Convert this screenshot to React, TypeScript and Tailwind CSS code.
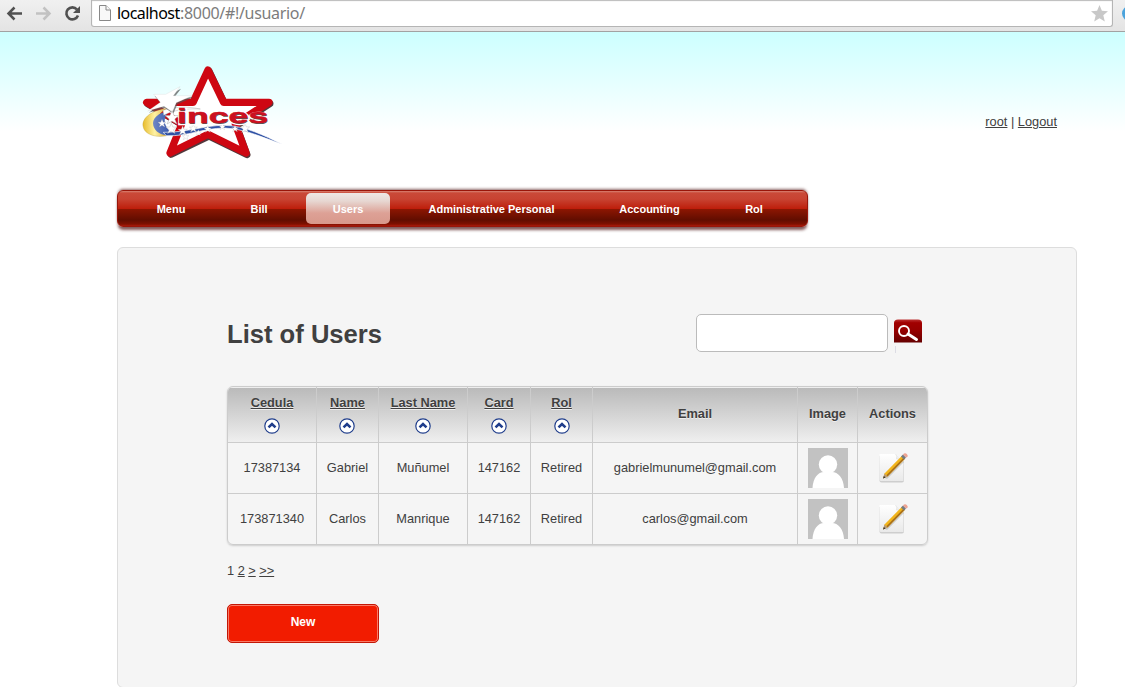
import React from 'react';

function BrowserBar() {
  return (
    <div className="flex h-8 shrink-0 border-b border-[#a2a2a2] bg-linear-to-b from-[#f0f0f0] to-[#e4e4e4]">
      <svg className="h-[28px] w-[91px] shrink-0" viewBox="0 0 91 28" fill="none">
        <path d="M22 13.500H8.500M14.500 7.500l-6 6 6 6" stroke="#505050" strokeWidth="2.500" />
        <path d="M36 13.500h13.500M43.500 7.500l6 6-6 6" stroke="#c2c2c2" strokeWidth="2.500" />
        <path d="M77 9.500a6 6 0 1 0 1 6" stroke="#505050" strokeWidth="2.600" />
        <path d="M80 6v7h-7z" fill="#505050" />
      </svg>
      <div className="flex h-[27px] w-[1022px] shrink-0 items-center rounded-b-[3px] border border-t-0 border-[#b5b5b5] bg-white shadow-[inset_0_1px_1px_#bbb]">
        <svg className="ml-[7px] h-4 w-3 shrink-0" viewBox="0 0 12 16" fill="#f8f8f8" stroke="#888">
          <path d="M.5.500h6.500l4.500 4.500v10.500H.5z" />
          <path d="M7 .5V5h4.500" />
        </svg>
        <div className="ml-[6px] flex whitespace-nowrap font-['Noto_Sans',sans-serif] text-[16px] leading-[26px]">
          <span className="w-[63px] tracking-[-0.55px] text-black">localhost</span>
          <span className="tracking-[-0.32px] text-[#7c7c7c]">:8000/#!/usuario/</span>
        </div>
        <svg className="ml-auto mr-[4px] size-[17px]" viewBox="0 0 17 17" fill="#c8c8c8">
          <path d="m8.500 0 2.400 5.800 6.100.500-4.700 4 1.500 6.200-5.300-3.300-5.300 3.300 1.500-6.200L0 6.300l6.100-.5z" />
        </svg>
      </div>
      <div className="h-7 w-[12px] overflow-hidden pl-[9px] pt-[6px]">
        <div className="size-[15px] rounded-full bg-[#4ba3dc]" />
      </div>
    </div>
  );
}

const smallStar = 'M0-10 3-3 10-3 4 2 7 9 0 5-7 9-4 2-10-3-3-3Z';

function Logo() {
  return (
    <svg className="ml-[13px] mt-[23px] h-[115px] w-[160px] shrink-0" viewBox="0 0 480 345">
      <defs>
        <linearGradient id="gold" x1="0" x2="1">
          <stop stopColor="#e8bd2c" />
          <stop offset=".45" stopColor="#fff2a5" />
          <stop offset="1" stopColor="#d5a229" />
        </linearGradient>
        <linearGradient id="blue" x1="0" x2="1">
          <stop stopColor="#6f87c5" />
          <stop offset="1" stopColor="#2448a5" />
        </linearGradient>
        <filter id="soft"><feGaussianBlur stdDeviation="2" /></filter>
      </defs>
      <path d="M234 45 281 143H417L316 209 348 296 234 240 120 295 155 207 50 143H189Z" fill="none" stroke="#35191b" strokeWidth="21" strokeLinejoin="round" transform="translate(3 3)" opacity=".85" filter="url(#soft)" />
      <path d="M234 45 281 142H417L316 207 348 294 234 238 120 294 155 207 50 142H189Z" fill="#fff" stroke="#ce0712" strokeWidth="22" strokeLinejoin="round" />
      <path d="M112 160C65 166 36 188 39 213C42 240 82 251 118 240C72 227 65 184 112 160Z" fill="url(#gold)" stroke="#b79c3c" strokeWidth="1" />
      <path d="M120 166C82 175 65 191 70 212C76 235 106 247 137 238C105 225 91 192 120 166Z" fill="url(#blue)" />
      <path d="M99 166C145 152 179 156 211 162C166 160 126 166 101 181Z" fill="#fff" stroke="#909090" strokeWidth="1" />
      <path d="M100 232C175 232 225 211 282 211C345 212 402 241 457 268C390 245 345 222 284 219C215 220 174 245 109 242Z" fill="#2e50a4" stroke="#fff" strokeWidth="2" />
      <path d="M151 98 131 124H188L140 145 128 173 103 156 54 170 92 144 72 120H108Z" fill="#555" opacity=".7" filter="url(#soft)" transform="translate(2 3)" />
      <path d="M150 95 130 122H187L139 143 127 171 102 154 53 168 91 142 71 118H107Z" fill="#fff" stroke="#bbb" strokeWidth=".6" />
      {[
        [96, 205, 1.2], [126, 188, 2.1], [124, 221, 1.6], [158, 227, 1.4], [190, 220, 1.2],
        [167, 245, 1], [205, 233, .9], [233, 222, 1.1], [277, 215, 1], [315, 221, 1], [345, 220, 1.4], [190, 202, .9],
      ].map(([x, y, s]) => (
        <path key={`${x}-${y}`} d={smallStar} fill="#fff" stroke="#aaa" strokeWidth=".7" transform={`translate(${x} ${y}) scale(${s})`} />
      ))}
      <g fontFamily="Liberation Sans, sans-serif" fontWeight="bold" fontSize="61" paintOrder="stroke">
        <text x="143" y="207" textLength="274" lengthAdjust="spacingAndGlyphs" fill="#555" stroke="#fff" strokeWidth="7">inces</text>
        <text x="141" y="205" textLength="274" lengthAdjust="spacingAndGlyphs" fill="#cc1020" stroke="#c71320" strokeWidth="1.500">inces</text>
      </g>
    </svg>
  );
}

function Nav() {
  const item = 'flex h-[31px] items-center justify-center rounded-[5px] pt-[1.5px]';
  return (
    <nav className="mt-[20px] flex h-[37px] w-[691px] shrink-0 rounded-[6px] border border-[#991509] bg-[linear-gradient(180deg,#d98273_0px,#ca4938_2px,#c84332_8px,#bd1d0a_18px,#8d1602_18px,#610d00_29px,#7f1000_33px,#aa1b0b_35px)] pt-[2px] text-[11px] font-bold text-white shadow-[0_-2px_3px_-1px_rgba(65,0,0,.6),0_4px_3px_-1px_rgba(65,0,0,.65)]">
      <a className={`${item} ml-[12px] w-[82px]`}>Menu</a>
      <a className={`${item} ml-[12px] w-[70px]`}>Bill</a>
      <a className={`${item} ml-[12px] w-[84px] bg-[linear-gradient(180deg,#eee8e5_0px,#e7d7d2_8px,#dda196_20px,#d8988b_31px)]`}>Users</a>
      <a className={`${item} ml-[12px] w-[179px]`}>Administrative Personal</a>
      <a className={`${item} ml-[11px] w-[115px]`}>Accounting</a>
      <a className={`${item} ml-[12px] w-[70px]`}>Rol</a>
    </nav>
  );
}

function SearchIcon() {
  return (
    <svg className="ml-[6px] mt-[5px] h-[34px] w-[28px] shrink-0" viewBox="0 0 28 34">
      <defs>
        <linearGradient id="search" x2="0" y2="1">
          <stop stopColor="#bd3434" />
          <stop offset=".14" stopColor="#a10000" />
          <stop offset=".48" stopColor="#960000" />
          <stop offset="1" stopColor="#650000" />
        </linearGradient>
      </defs>
      <path d="M0 23.500V4Q0 .5 4 .5H24Q28 .5 28 4V23.500Z" fill="url(#search)" />
      <circle cx="10" cy="12" r="5" fill="none" stroke="#fff" strokeWidth="1.900" />
      <path d="m14 15 8.500 5.500" stroke="#fff" strokeWidth="3" strokeLinecap="round" />
      <path d="M1.500 27v7" stroke="#dcdce4" />
    </svg>
  );
}

function SortIcon() {
  return (
    <svg className="size-4" viewBox="0 0 16 16" fill="none" stroke="#203e8c">
      <circle cx="8" cy="8" r="7.200" fill="#fff" strokeWidth="1.200" />
      <path d="m4.500 9.400 3.500-3.300 3.500 3.300" strokeWidth="2.600" />
    </svg>
  );
}

function Avatar() {
  return (
    <svg className="size-10" viewBox="0 0 40 40">
      <path fill="#c2c2c2" d="M0 0h40v40H0z" />
      <circle cx="20" cy="16.500" r="9.200" fill="#fff" />
      <path d="M4.500 40C5 30 10 24 16 24h8c6 0 11.500 6 12 16Z" fill="#fff" />
    </svg>
  );
}

function EditIcon() {
  return (
    <svg className="size-8" viewBox="0 0 32 32">
      <defs>
        <linearGradient id="paper" x2="0" y2="1"><stop stopColor="#fff" /><stop offset="1" stopColor="#e9e9e9" /></linearGradient>
      </defs>
      <path d="M1.500 4v24.500q0 2 2 2H24q2 0 2-2V9Z" fill="#cecece" />
      <path d="M1.500 2h16l8 7v20H3q-1.500 0-1.500-1.500z" fill="url(#paper)" />
      <path d="M17.500 2q2 2 1 5 4-1 7 2" fill="#eee" stroke="#ddd" strokeWidth=".6" />
      <path d="m7 26 18-17 1 1L9 27Z" fill="#777" opacity=".3" />
      <path d="m5 26.500 1.500-5L24.200 3.500l3 3L9.500 24.500Z" fill="#f2b51b" />
      <path d="M9.500 24.500 27.200 6.500l-1.200-1.200L8.300 23.300Z" fill="#a8701c" />
      <path d="m5 26.500 1.500-5 3 3Z" fill="#b79a7b" />
      <path d="m5 26.500.9-2.600 1.700 1.700Z" fill="#333" />
      <path d="m23 4.500 2-2 3 3-2 2Z" fill="#747b83" />
      <path d="m25 2.500 1-1q1.500-.8 3 .7t.3 2.800L28 5.500Z" fill="#eda392" />
    </svg>
  );
}

const columns = ['Cedula', 'Name', 'Last Name', 'Card', 'Rol', 'Email', 'Image', 'Actions'];
const users = [
  ['17387134', 'Gabriel', 'Muñumel', '147162', 'Retired', 'gabrielmunumel@gmail.com'],
  ['173871340', 'Carlos', 'Manrique', '147162', 'Retired', 'carlos@gmail.com'],
];
const grid = 'grid grid-cols-[89px_62px_89px_63px_62px_205px_60px_69px]';
const cell = 'flex items-center justify-center border-r border-[#ccc] last:border-r-0';

function UsersTable() {
  return (
    <div className="mt-[34px] w-[701px] overflow-hidden rounded-[6px] border border-[#ccc] shadow-[0_1px_2px_#ccc]">
      <div className={`${grid} h-[56px] border-b border-[#ccc] bg-linear-to-b from-[#b9b9b9] to-[#efefef] font-bold shadow-[inset_0_1px_0_#eee]`}>
        {columns.map((name, i) => (
          <div key={name} className={cell}>
            {i < 5 ? (
              <div className="flex flex-col items-center gap-[7px] leading-4">
                <a className="underline [text-shadow:0_1px_0_#eee]">{name}</a>
                <SortIcon />
              </div>
            ) : <span className="pb-[2px] [text-shadow:0_1px_0_#eee]">{name}</span>}
          </div>
        ))}
      </div>
      {users.map((user, row) => (
        <div key={user[0]} className={`${grid} ${row === 0 ? 'h-[51px] border-b border-[#ccc]' : 'h-[50px]'}`}>
          {user.map((value, i) => <div key={i} className={cell}>{value}</div>)}
          <div className={cell}><Avatar /></div>
          <div className={`${cell} pl-[3px]`}><EditIcon /></div>
        </div>
      ))}
    </div>
  );
}

export default function App() {
  return (
    <div className="flex h-[687px] w-[1125px] flex-col overflow-hidden bg-white font-['Liberation_Sans',sans-serif] text-[12.8px] text-[#404040]">
      <BrowserBar />
      <div className="flex h-[655px] flex-col bg-[linear-gradient(180deg,#ccffff_0px,#ffffff_100px)] pl-[117px]">
        <header className="flex h-[138px] shrink-0">
          <Logo />
          <div className="ml-auto mr-[68px] mt-[82px] leading-4">
            <a className="underline">root</a> | <a className="underline">Logout</a>
          </div>
        </header>
        <Nav />
        <main className="mt-[20px] flex h-[441px] w-[960px] shrink-0 flex-col rounded-[6px] border border-[#ddd] bg-[#f5f5f5] pl-[109px] pt-[66px]">
          <div className="flex h-[38px] shrink-0">
            <h1 className="w-[469px] text-[25.6px] font-bold leading-[41px]">List of Users</h1>
            <input aria-label="Search users" className="h-[38px] w-[192px] rounded-[5px] border border-[#bbb] bg-white px-2 outline-none" />
            <SearchIcon />
          </div>
          <UsersTable />
          <div className="mt-[18px] flex gap-[3.500px] leading-4">
            <span>1</span><a className="underline">2</a><a className="underline">&gt;</a><a className="underline">&gt;&gt;</a>
          </div>
          <button className="mt-[25px] h-[39px] w-[152px] rounded-[5px] border border-[#c31605] bg-[#f21c00] pb-[3px] text-[12px] font-bold text-white shadow-[inset_0_0_0_1px_#f87b68]">New</button>
        </main>
      </div>
    </div>
  );
}
